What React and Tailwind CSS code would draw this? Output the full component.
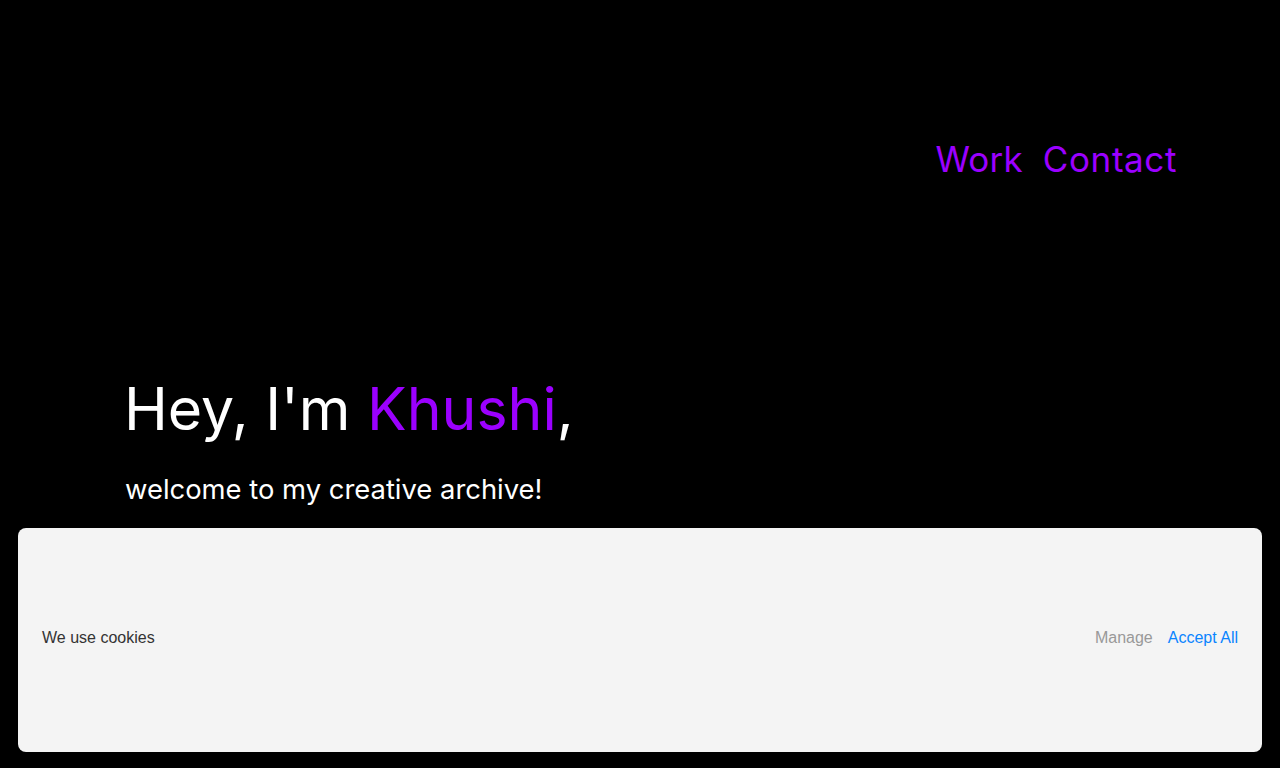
import React from 'react';

const App = () => {
  return (
    <div className="relative min-h-screen w-full bg-black font-['Inter',sans-serif] text-white">
      {/* Nav */}
      <nav className="flex justify-end gap-[20px] pt-[135px] pr-[103px]">
        <a href="#" className="text-[35px] leading-[48px] tracking-[0.2px] text-[#9b00ff]">Work</a>
        <a href="#" className="text-[35px] leading-[48px] tracking-[0.6px] text-[#9b00ff]">Contact</a>
      </nav>

      {/* Hero */}
      <section className="pl-[124px] pt-[188px]">
        <h1 className="text-[59px] leading-[76px]">
          Hey, I'm <span className="text-[#9b00ff]">Khushi</span>,
        </h1>
        <p className="mt-[24px] pl-[1px] text-[27.4px] leading-[36px]">welcome to my creative archive!</p>
      </section>

      {/* Cookie banner */}
      <div className="fixed bottom-[16px] left-[18px] right-[18px] flex h-[224px] items-center justify-between rounded-lg bg-[#f4f4f4] px-[24px] pb-[4px] font-['Liberation_Sans',Arial,sans-serif] text-[16px]">
        <span className="text-[#333333]">We use cookies</span>
        <div className="flex items-center gap-[15px]">
          <button className="text-[#999999]">Manage</button>
          <button className="text-[#0a84ff]">Accept All</button>
        </div>
      </div>
    </div>
  );
};

export default App;
